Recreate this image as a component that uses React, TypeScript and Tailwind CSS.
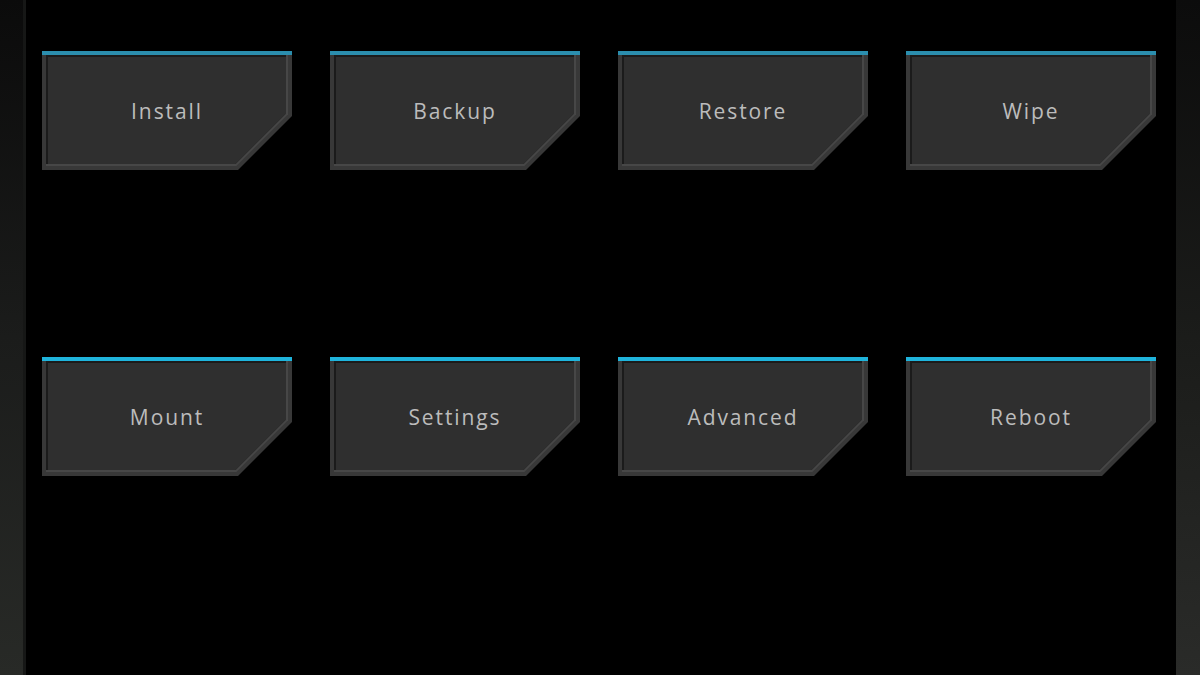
const rows = [
  { accent: "#2b8eae", items: ["Install", "Backup", "Restore", "Wipe"] },
  { accent: "#1fb4dc", items: ["Mount", "Settings", "Advanced", "Reboot"] },
];

function MenuButton({ label, accent }: { label: string; accent: string }) {
  return (
    <div className="relative flex h-[119px] w-[250px] items-center justify-center pt-[2px]">
      <svg className="absolute inset-0" width="250" height="119" viewBox="0 0 250 119">
        <polygon points="0,0 250,0 250,65 196,119 0,119" fill="#383838" />
        <polygon points="4,4 246,4 246,63.3 194.3,115 4,115" fill="#474747" />
        <polygon points="4,4 244,4 244,62.5 193.5,113 4,113" fill="#1b1b1b" />
        <polygon points="6,6 244,6 244,62.5 193.5,113 6,113" fill="#2f2f2f" />
        <rect x="0" y="0" width="250" height="4" fill={accent} />
      </svg>
      <span className="relative font-['Open_Sans',sans-serif] text-[21px] font-medium tracking-[1.9px] text-[#bcbcbc]">
        {label}
      </span>
    </div>
  );
}

export default function App() {
  return (
    <div className="flex h-[675px] w-[1200px] overflow-hidden bg-black">
      <div className="w-[23px] bg-gradient-to-b from-[#0b0b0b] via-[#1b1c1b] to-[#282a27]" />
      <div className="w-[3px] bg-[#161716]" />
      <main className="flex-1 pl-[16px] pt-[51px]">
        <div className="grid grid-cols-[repeat(4,250px)] gap-x-[38px] gap-y-[187px]">
          {rows.flatMap((row) =>
            row.items.map((label) => <MenuButton key={label} label={label} accent={row.accent} />)
          )}
        </div>
      </main>
      <div className="w-[24px] bg-gradient-to-b from-[#0c0c0c] via-[#1b1c1a] to-[#2a2b29]" />
    </div>
  );
}
